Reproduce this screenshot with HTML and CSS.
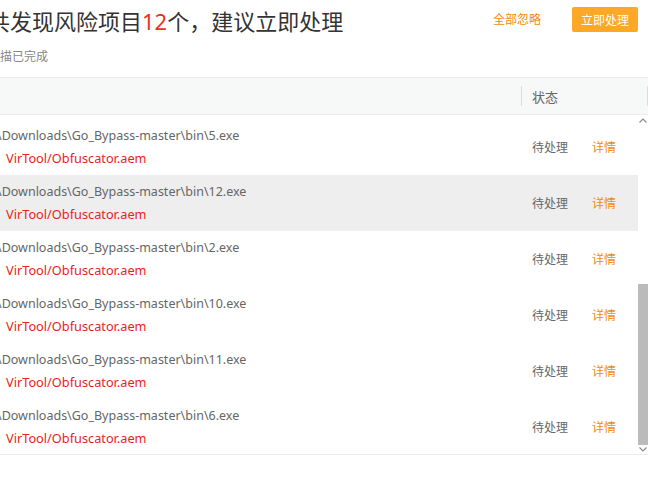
FILE: index.html
```html
<!DOCTYPE html>
<html>
<head>
<meta charset="utf-8">
<link rel="stylesheet" href="styles.css">
</head>
<body>
<div class="page">
  <div class="top">
    <div class="summary">
      <h1 class="title">共发现风险项目<span class="num">12</span>个，建议立即处理</h1>
      <div class="sub">扫描已完成</div>
    </div>
    <div class="actions">
      <a class="ignore">全部忽略</a>
      <button class="fix">立即处理</button>
    </div>
  </div>
  <div class="thead">
    <div class="th-main"></div>
    <div class="sep"></div>
    <div class="th-status">状态</div>
    <div class="sep"></div>
  </div>
  <div class="list">
    <div class="rows">
      <div class="row">
        <div class="info"><div class="path">\Downloads\Go_Bypass-master\bin\5.exe</div><div class="virus">VirTool/Obfuscator.aem</div></div>
        <div class="status"><span class="state">待处理</span><a class="detail">详情</a></div>
      </div>
      <div class="row hover">
        <div class="info"><div class="path">\Downloads\Go_Bypass-master\bin\12.exe</div><div class="virus">VirTool/Obfuscator.aem</div></div>
        <div class="status"><span class="state">待处理</span><a class="detail">详情</a></div>
      </div>
      <div class="row">
        <div class="info"><div class="path">\Downloads\Go_Bypass-master\bin\2.exe</div><div class="virus">VirTool/Obfuscator.aem</div></div>
        <div class="status"><span class="state">待处理</span><a class="detail">详情</a></div>
      </div>
      <div class="row">
        <div class="info"><div class="path">\Downloads\Go_Bypass-master\bin\10.exe</div><div class="virus">VirTool/Obfuscator.aem</div></div>
        <div class="status"><span class="state">待处理</span><a class="detail">详情</a></div>
      </div>
      <div class="row">
        <div class="info"><div class="path">\Downloads\Go_Bypass-master\bin\11.exe</div><div class="virus">VirTool/Obfuscator.aem</div></div>
        <div class="status"><span class="state">待处理</span><a class="detail">详情</a></div>
      </div>
      <div class="row">
        <div class="info"><div class="path">\Downloads\Go_Bypass-master\bin\6.exe</div><div class="virus">VirTool/Obfuscator.aem</div></div>
        <div class="status"><span class="state">待处理</span><a class="detail">详情</a></div>
      </div>
    </div>
    <div class="scrollbar">
      <svg class="arrow up" width="8" height="5" viewBox="0 0 8 5"><path d="M0.5 4.5 L4 1 L7.5 4.5" fill="none" stroke="#8a8a8a" stroke-width="1.2"/></svg>
      <div class="track"></div>
      <div class="thumb"></div>
      <svg class="arrow down" width="8" height="5" viewBox="0 0 8 5"><path d="M0.5 0.5 L4 4 L7.5 0.5" fill="none" stroke="#8a8a8a" stroke-width="1.2"/></svg>
    </div>
  </div>
</div>
</body>
</html>
```
FILE: styles.css
```css
html, body {
  margin: 0;
  padding: 0;
  background: #fff;
  overflow: hidden;
}
body {
  width: 670px;
  height: 478px;
  font-family: "Noto Sans", "Noto Sans CJK SC", sans-serif;
}
.page {
  margin-left: -12px;
  width: 660px;
}
.top {
  height: 77px;
  display: flex;
  justify-content: space-between;
  align-items: flex-start;
}
.summary {
  display: flex;
  flex-direction: column;
}
.title {
  margin: 6px 0 0 0;
  font-size: 22px;
  line-height: 30px;
  font-weight: normal;
  color: #333;
  white-space: nowrap;
}
.num {
  color: #e8301c;
}
.sub {
  margin-top: 12px;
  font-size: 12px;
  line-height: 18px;
  color: #888;
}
.actions {
  display: flex;
  align-items: center;
  gap: 31px;
  margin-top: 7px;
  padding-right: 10px;
}
.ignore {
  font-size: 12px;
  color: #f28a0c;
  line-height: 25px;
}
.fix {
  width: 66px;
  height: 25px;
  border: none;
  border-radius: 2px;
  background: #ffa726;
  color: #fff;
  font-family: "Noto Sans", "Noto Sans CJK SC", sans-serif;
  font-size: 12px;
  padding: 0;
}
.thead {
  height: 36px;
  border-top: 1px solid #ececec;
  border-bottom: 1px solid #ececec;
  background: #f7f8f8;
  display: flex;
  align-items: center;
}
.th-main {
  width: 533px;
}
.sep {
  width: 1px;
  height: 20px;
  background: #dcdcdc;
}
.th-status {
  flex: 1;
  padding-left: 10px;
  font-size: 13px;
  color: #666;
}
.list {
  display: flex;
  height: 339px;
  border-bottom: 1px solid #ececec;
}
.rows {
  flex: 1;
  overflow: hidden;
  padding-top: 4px;
}
.row {
  height: 56px;
  display: flex;
  align-items: center;
}
.row.hover {
  background: #eeeeee;
}
.info {
  width: 525px;
  padding-left: 9px;
  display: flex;
  flex-direction: column;
  line-height: 22px;
}
.path {
  color: #666;
  font-size: 12.5px;
  white-space: nowrap;
}
.virus {
  color: #e3261c;
  font-size: 12.75px;
  padding-left: 9px;
}
.status {
  display: flex;
  align-items: center;
  gap: 24px;
  padding-left: 10px;
  font-size: 12px;
}
.state {
  color: #666;
}
.detail {
  color: #f28a0c;
}
.scrollbar {
  width: 10px;
  display: flex;
  flex-direction: column;
  align-items: center;
}
.arrow {
  display: block;
}
.arrow.up {
  margin-top: 3px;
}
.track {
  flex: 1;
}
.thumb {
  width: 10px;
  height: 161px;
  background: #bbbbbb;
}
.arrow.down {
  margin-top: 2px;
  margin-bottom: 2px;
}
```
